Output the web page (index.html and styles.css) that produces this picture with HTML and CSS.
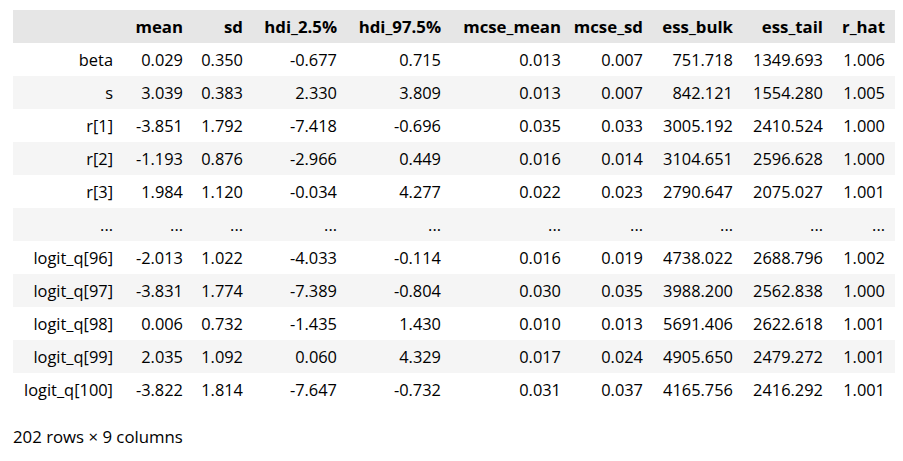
FILE: index.html
```html
<!DOCTYPE html>
<html>
<head>
<meta charset="utf-8">
<link rel="stylesheet" href="styles.css">
</head>
<body>
<div class="output">
<table class="dataframe">
<colgroup>
<col class="c-idx"><col class="c-mean"><col class="c-sd"><col class="c-h25"><col class="c-h975"><col class="c-mm"><col class="c-ms"><col class="c-eb"><col class="c-et"><col class="c-rh">
</colgroup>
<thead>
<tr><th></th><th>mean</th><th>sd</th><th>hdi_2.5%</th><th>hdi_97.5%</th><th>mcse_mean</th><th>mcse_sd</th><th>ess_bulk</th><th>ess_tail</th><th>r_hat</th></tr>
</thead>
<tbody>
<tr><th>beta</th><td>0.029</td><td>0.350</td><td>-0.677</td><td>0.715</td><td>0.013</td><td>0.007</td><td>751.718</td><td>1349.693</td><td>1.006</td></tr>
<tr><th>s</th><td>3.039</td><td>0.383</td><td>2.330</td><td>3.809</td><td>0.013</td><td>0.007</td><td>842.121</td><td>1554.280</td><td>1.005</td></tr>
<tr><th>r[1]</th><td>-3.851</td><td>1.792</td><td>-7.418</td><td>-0.696</td><td>0.035</td><td>0.033</td><td>3005.192</td><td>2410.524</td><td>1.000</td></tr>
<tr><th>r[2]</th><td>-1.193</td><td>0.876</td><td>-2.966</td><td>0.449</td><td>0.016</td><td>0.014</td><td>3104.651</td><td>2596.628</td><td>1.000</td></tr>
<tr><th>r[3]</th><td>1.984</td><td>1.120</td><td>-0.034</td><td>4.277</td><td>0.022</td><td>0.023</td><td>2790.647</td><td>2075.027</td><td>1.001</td></tr>
<tr><th>...</th><td>...</td><td>...</td><td>...</td><td>...</td><td>...</td><td>...</td><td>...</td><td>...</td><td>...</td></tr>
<tr><th>logit_q[96]</th><td>-2.013</td><td>1.022</td><td>-4.033</td><td>-0.114</td><td>0.016</td><td>0.019</td><td>4738.022</td><td>2688.796</td><td>1.002</td></tr>
<tr><th>logit_q[97]</th><td>-3.831</td><td>1.774</td><td>-7.389</td><td>-0.804</td><td>0.030</td><td>0.035</td><td>3988.200</td><td>2562.838</td><td>1.000</td></tr>
<tr><th>logit_q[98]</th><td>0.006</td><td>0.732</td><td>-1.435</td><td>1.430</td><td>0.010</td><td>0.013</td><td>5691.406</td><td>2622.618</td><td>1.001</td></tr>
<tr><th>logit_q[99]</th><td>2.035</td><td>1.092</td><td>0.060</td><td>4.329</td><td>0.017</td><td>0.024</td><td>4905.650</td><td>2479.272</td><td>1.001</td></tr>
<tr><th>logit_q[100]</th><td>-3.822</td><td>1.814</td><td>-7.647</td><td>-0.732</td><td>0.031</td><td>0.037</td><td>4165.756</td><td>2416.292</td><td>1.001</td></tr>
</tbody>
</table>
<p class="shape">202 rows × 9 columns</p>
</div>
</body>
</html>
```

FILE: styles.css
```css
html, body {
  margin: 0;
  padding: 0;
  background: #ffffff;
}

body {
  font-family: "Open Sans", "Noto Sans", sans-serif;
  font-size: 16.4px;
  color: #000000;
}

.output {
  padding: 10px 0 0 13px;
}

.dataframe {
  table-layout: fixed;
  width: 882px;
  border-collapse: collapse;
  border-spacing: 0;
}

.c-idx { width: 110px; }
.c-mean { width: 70px; }
.c-sd { width: 60px; }
.c-h25 { width: 94px; }
.c-h975 { width: 104px; }
.c-mm { width: 120px; }
.c-ms { width: 82px; }
.c-eb { width: 90px; }
.c-et { width: 90px; }
.c-rh { width: 62px; }

.dataframe th,
.dataframe td {
  height: 33px;
  padding: 0 10px 0 0;
  text-align: right;
  white-space: nowrap;
  vertical-align: middle;
  line-height: 20px;
}

.dataframe thead th {
  background: #e6e6e6;
  font-weight: 700;
  font-size: 16.8px;
}

.dataframe tbody th {
  font-weight: 400;
}

.dataframe tbody tr:nth-child(even) {
  background: #f5f5f5;
}

.shape {
  margin: 20px 0 0 0;
  line-height: 22px;
  font-size: 16.8px;
}
```
